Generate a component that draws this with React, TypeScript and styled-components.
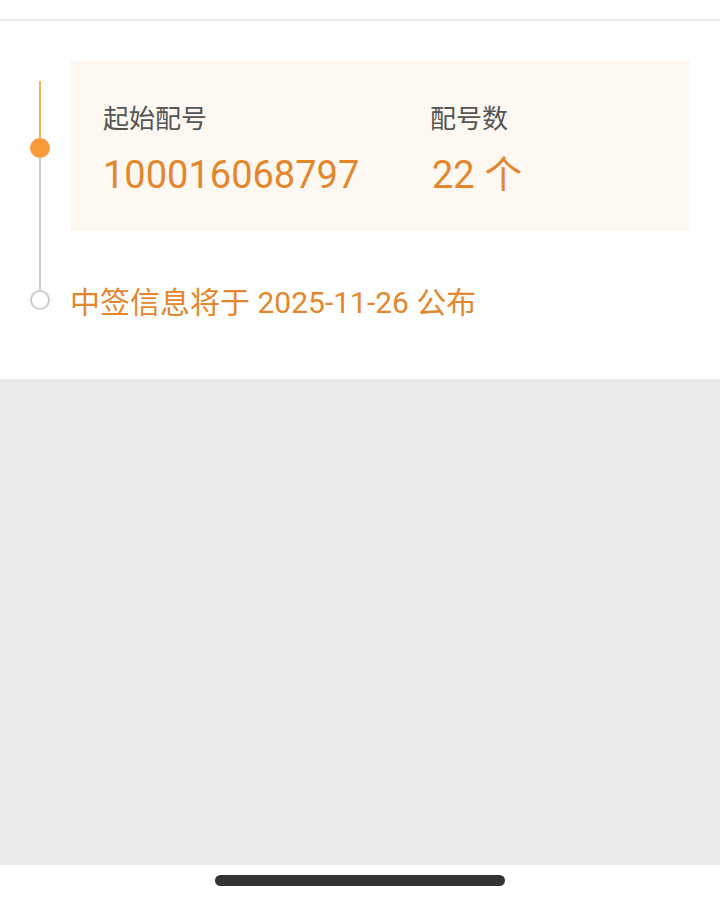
import styled, { createGlobalStyle } from "styled-components";

const GlobalStyle = createGlobalStyle`
  html, body {
    margin: 0;
    padding: 0;
    background: #ffffff;
  }
  body {
    font-family: Roboto, "Noto Sans CJK SC", sans-serif;
  }
`;

const Page = styled.div`
  width: 720px;
  height: 897px;
  display: flex;
  flex-direction: column;
  background: #ffffff;
`;

const TopBar = styled.div`
  height: 19px;
  border-bottom: 2px solid #ececec;
`;

const Section = styled.div`
  padding: 40px 30px 69px 30px;
  display: flex;
  flex-direction: column;
`;

const Item = styled.div`
  display: grid;
  grid-template-columns: 20px 1fr;
  column-gap: 20px;
`;

const Rail = styled.div`
  display: flex;
  flex-direction: column;
  align-items: center;
`;

const Segment = styled.div<{ $color: string; $height?: number; $offset?: number }>`
  width: 2px;
  background: ${(p) => p.$color};
  margin-top: ${(p) => p.$offset ?? 0}px;
  ${(p) => (p.$height ? `height: ${p.$height}px;` : "flex: 1;")}
`;

const Dot = styled.div`
  width: 20px;
  height: 20px;
  border-radius: 50%;
  background: #fb9a3a;
  flex-shrink: 0;
`;

const Ring = styled.div`
  width: 20px;
  height: 20px;
  box-sizing: border-box;
  border-radius: 50%;
  border: 2.5px solid #cccccc;
  flex-shrink: 0;
`;

const Card = styled.div`
  background: #fdf8f2;
  height: 170px;
  box-sizing: border-box;
  padding: 43px 0 0 33px;
  display: grid;
  grid-template-columns: 327px 1fr;
`;

const Field = styled.div`
  display: flex;
  flex-direction: column;
  gap: 19px;
`;

const Label = styled.div`
  font-size: 26px;
  line-height: 30px;
  color: #555555;
`;

const Value = styled.div<{ $shift?: number }>`
  font-size: 38px;
  line-height: 44px;
  color: #e3872d;
  margin-left: ${(p) => p.$shift ?? 0}px;
`;

const Notice = styled.div`
  margin-top: 59px;
  height: 20px;
  display: flex;
  align-items: center;
  font-size: 30px;
  color: #e3872d;
  white-space: nowrap;
`;

const Filler = styled.div`
  flex: 1;
  background: #ebebeb;
`;

const NavArea = styled.div`
  height: 32px;
  display: flex;
  justify-content: center;
  padding-top: 10px;
  box-sizing: border-box;
`;

const HomeBar = styled.div`
  width: 290px;
  height: 11px;
  border-radius: 6px;
  background: #333333;
`;

export default function App() {
  return (
    <Page>
      <GlobalStyle />
      <TopBar />
      <Section>
        <Item>
          <Rail>
            <Segment $color="#ebb462" $height={57} $offset={20} />
            <Dot />
            <Segment $color="#cccccc" />
          </Rail>
          <Card>
            <Field>
              <Label>起始配号</Label>
              <Value>100016068797</Value>
            </Field>
            <Field>
              <Label>配号数</Label>
              <Value $shift={2}>22 个</Value>
            </Field>
          </Card>
        </Item>
        <Item>
          <Rail>
            <Segment $color="#cccccc" $height={59} />
            <Ring />
          </Rail>
          <Notice>中签信息将于 2025-11-26 公布</Notice>
        </Item>
      </Section>
      <Filler />
      <NavArea>
        <HomeBar />
      </NavArea>
    </Page>
  );
}
